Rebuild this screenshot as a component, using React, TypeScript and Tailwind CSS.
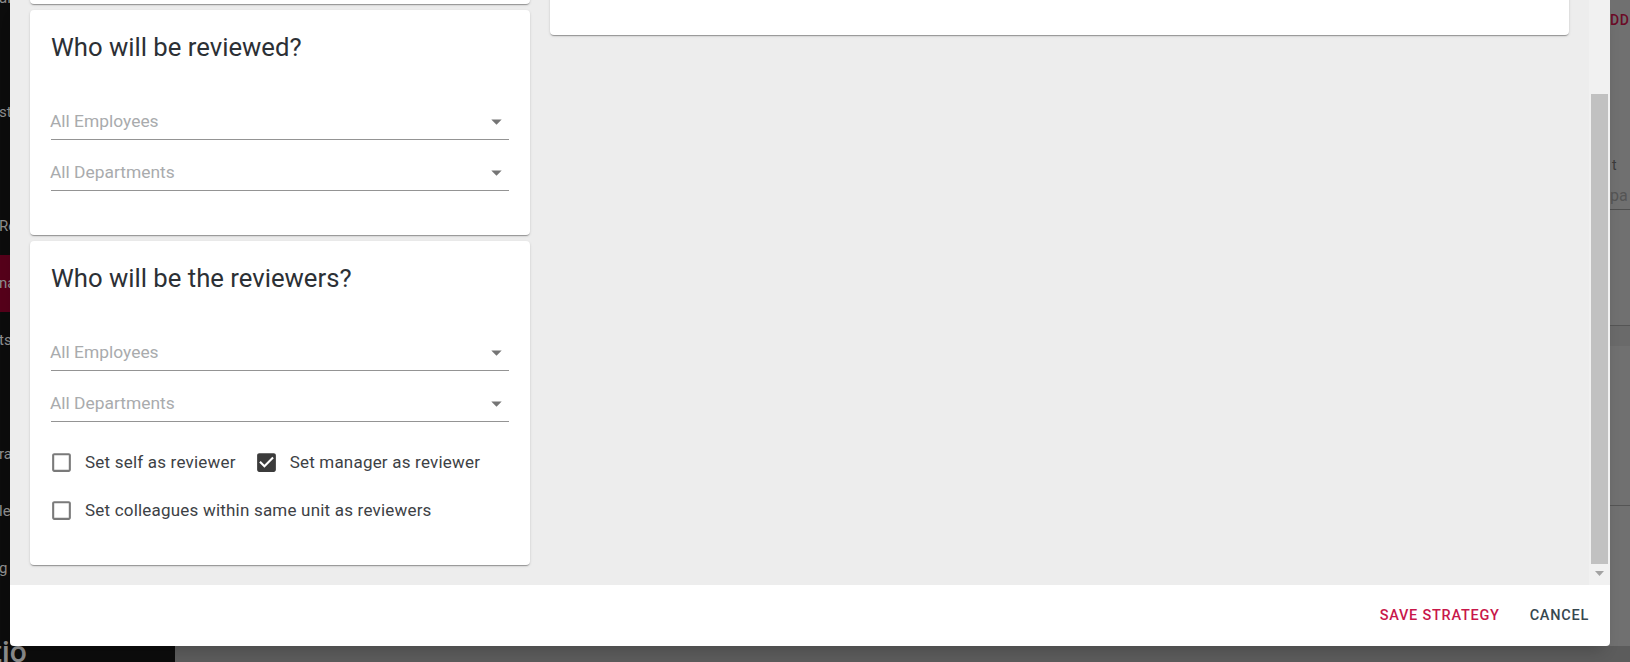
import React from 'react';

// MUI-like elevation 1
const paper =
  'rounded-[4px] bg-white shadow-[0_2px_1px_-1px_rgba(0,0,0,0.2),0_1px_1px_0_rgba(0,0,0,0.14),0_1px_3px_0_rgba(0,0,0,0.12)]';

function SelectField({ placeholder }: { placeholder: string }) {
  return (
    <div className="flex items-center border-b border-[#949494] pt-[6px] pb-[8px]">
      <span className="-ml-[1px] flex-1 text-[17.4px] leading-[20px] text-[#a9abad]">{placeholder}</span>
      <svg className="-my-[2.5px] h-[25px] w-[25px]" viewBox="0 0 24 24">
        <path d="M7 10l5 5 5-5z" fill="#757575" />
      </svg>
    </div>
  );
}

function CheckIcon({ checked }: { checked?: boolean }) {
  return (
    <svg className="h-[25px] w-[25px] shrink-0" viewBox="0 0 24 24">
      {checked ? (
        <path
          fill="#3b3b3b"
          d="M19 3H5c-1.11 0-2 .9-2 2v14c0 1.1.89 2 2 2h14c1.11 0 2-.9 2-2V5c0-1.1-.89-2-2-2zm-9 14l-5-5 1.41-1.41L10 14.17l7.59-7.59L19 8l-9 9z"
        />
      ) : (
        <path
          fill="#7a7a7a"
          d="M19 5v14H5V5h14m0-2H5c-1.1 0-2 .9-2 2v14c0 1.1.9 2 2 2h14c1.1 0 2-.9 2-2V5c0-1.1-.9-2-2-2z"
        />
      )}
    </svg>
  );
}

function CheckOption({ label, checked, className = '' }: { label: string; checked?: boolean; className?: string }) {
  return (
    <label className={`flex items-center ${className}`}>
      <CheckIcon checked={checked} />
      <span className="ml-[11px] text-[17px] leading-[20px] tracking-[0.2px] text-[#3d4145]">{label}</span>
    </label>
  );
}

function CardTitle({ children }: { children: React.ReactNode }) {
  return <h2 className="text-[25.7px] leading-[32px] font-normal text-[#2c3035]">{children}</h2>;
}

const sideItems = [
  { t: 'al', red: false },
  { t: '', red: false },
  { t: 'st', red: false },
  { t: '', red: false },
  { t: 'Re', red: false },
  { t: 'na', red: true },
  { t: 'ts', red: false },
  { t: '', red: false },
  { t: 'ra', red: false },
  { t: 'le', red: false },
  { t: 'g', red: false },
];

export default function App() {
  return (
    <div className="relative h-[662px] w-[1630px] overflow-hidden font-['Roboto',sans-serif]">
      {/* page behind the backdrop */}
      <div className="flex h-full">
        <aside className="flex w-[175px] flex-col bg-[#0c0c0c]">
          <div className="-mt-[30px] flex flex-col">
            {sideItems.map((it, i) => (
              <div
                key={i}
                className={`flex h-[57px] items-center text-[15px] text-[#8e8e8e] ${it.red ? 'bg-[#55001a]' : ''}`}
              >
                <span className="-ml-[1px]">{it.t}</span>
              </div>
            ))}
          </div>
          <div className="mt-auto -mb-[8px] -ml-[8px] text-[30px] leading-[36px] font-medium text-[#8a8a8a]">tio</div>
        </aside>
        <main className="flex flex-1 flex-col">
          <div className="flex flex-1 justify-end bg-[#707070]">
            <div className="flex w-[20px] flex-col text-[14px] text-[#2a2a2a]">
              <span className="mt-[10px] font-medium tracking-[0.5px] whitespace-nowrap text-[#6b0a26]">DD .</span>
              <span className="mt-[124px] pl-[2px] text-[#3b3b3b]">t</span>
              <span className="mt-[8px] text-[16px] text-[#555]">pa</span>
              <div className="mt-[1px] h-px bg-[#4f4f4f]" />
              <div className="mt-[115px] h-px bg-[#555]" />
              <div className="h-[20px] bg-[#6a6a6a]" />
              <div className="mt-[159px] h-px bg-[#555]" />
            </div>
          </div>
          <div className="h-[16px] bg-[#5c5c5c]" />
        </main>
      </div>

      {/* dialog */}
      <div className="absolute top-0 left-[10px] flex h-[646px] w-[1600px] flex-col overflow-hidden rounded-b-[4px] bg-white shadow-[0_11px_15px_-7px_rgba(0,0,0,0.2)]">
        <div className="flex min-h-0 flex-1">
          <div className="flex flex-1 flex-col justify-end overflow-hidden bg-[#ededed]">
            <div className="flex shrink-0 items-start gap-[20px] px-[20px] pb-[20px]">
              <div className="flex w-[500px] flex-col gap-[6px]">
                <section className={`${paper} h-[180px]`} />

                <section className={`${paper} px-[21px] pt-[21px] pb-[44px]`}>
                  <CardTitle>Who will be reviewed?</CardTitle>
                  <div className="mt-[42px] flex flex-col gap-[16px]">
                    <SelectField placeholder="All Employees" />
                    <SelectField placeholder="All Departments" />
                  </div>
                </section>

                <section className={`${paper} px-[21px] pt-[21px] pb-[33px]`}>
                  <CardTitle>Who will be the reviewers?</CardTitle>
                  <div className="mt-[42px] flex flex-col gap-[16px]">
                    <SelectField placeholder="All Employees" />
                    <SelectField placeholder="All Departments" />
                  </div>
                  <div className="mt-[18px] flex flex-col gap-[4px]">
                    <div className="-ml-[2px] flex h-[44px] items-center">
                      <CheckOption label="Set self as reviewer" />
                      <CheckOption label="Set manager as reviewer" checked className="ml-[18px]" />
                    </div>
                    <div className="-ml-[2px] flex h-[44px] items-center">
                      <CheckOption label="Set colleagues within same unit as reviewers" />
                    </div>
                  </div>
                </section>
              </div>
              <section className={`${paper} h-[211px] flex-1 rounded-t-none`} />
            </div>
          </div>
          {/* scrollbar */}
          <div className="flex w-[21px] flex-col justify-end bg-[#f1f1f1]">
            <div className="mx-[2px] h-[470px] bg-[#c1c1c1]" />
            <div className="flex h-[21px] items-center justify-center pb-[2px]">
              <svg width="9" height="5" viewBox="0 0 9 5">
                <path d="M0 0h9L4.5 5z" fill="#a3a3a3" />
              </svg>
            </div>
          </div>
        </div>
        <footer className="flex h-[61px] items-center justify-end gap-[30px] pr-[21px]">
          <button type="button" className="text-[14.5px] font-medium tracking-[0.75px] text-[#c8174a]">
            SAVE STRATEGY
          </button>
          <button type="button" className="text-[14.5px] font-medium tracking-[0.75px] text-[#37474f]">
            CANCEL
          </button>
        </footer>
      </div>
    </div>
  );
}
